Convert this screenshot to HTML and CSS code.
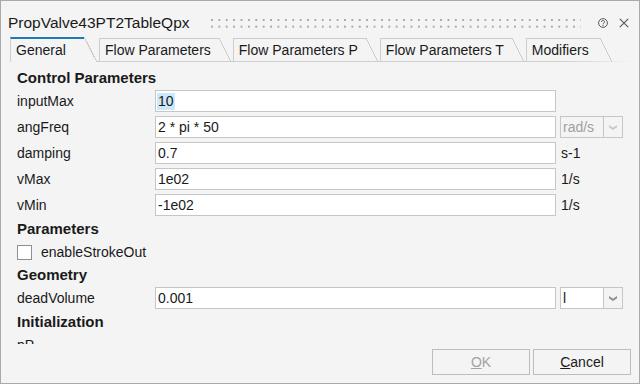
FILE: index.html
```html
<!DOCTYPE html>
<html>
<head>
<meta charset="utf-8">
<link rel="stylesheet" href="styles.css">
</head>
<body>
<div class="window">
  <div class="titlebar">
    <span class="title">PropValve43PT2TableQpx</span>
    <div class="grip"></div>
    <svg class="help" viewBox="0 0 10 10" width="10" height="10">
      <circle cx="5" cy="5" r="4.4" fill="none" stroke="#5a5a5a" stroke-width="1"/>
      <path d="M3.5 4 A1.5 1.5 0 1 1 5.8 5.2 C5.2 5.5 5 5.8 5 6.4" fill="none" stroke="#5a5a5a" stroke-width="1"/>
      <circle cx="5" cy="7.7" r="0.6" fill="#5a5a5a"/>
    </svg>
    <svg class="close" viewBox="0 0 10 10" width="10" height="10">
      <path d="M0.8 0.8 L9.2 9.2 M9.2 0.8 L0.8 9.2" stroke="#5a5a5a" stroke-width="1.2" fill="none"/>
    </svg>
  </div>

  <div class="tabs">
    <div class="tab active">General</div>
    <div class="tab">Flow Parameters</div>
    <div class="tab">Flow Parameters P</div>
    <div class="tab">Flow Parameters T</div>
    <div class="tab">Modifiers</div>
  </div>

  <div class="content">
    <div class="heading">Control Parameters</div>
    <div class="prop">
      <span class="label">inputMax</span>
      <div class="field"><span class="sel">10</span></div>
      <div class="unit"></div>
    </div>
    <div class="prop">
      <span class="label">angFreq</span>
      <div class="field">2 * pi * 50</div>
      <div class="unit">
        <div class="combo disabled">rad/s</div>
        <div class="arrow"><svg viewBox="0 0 8 5" width="8" height="5"><path d="M0 0 L4 2.8 L8 0 L8 2.2 L4 5 L0 2.2 Z" fill="#c8c8c8"/></svg></div>
      </div>
    </div>
    <div class="prop">
      <span class="label">damping</span>
      <div class="field">0.7</div>
      <div class="unit"><span class="unit-text">s-1</span></div>
    </div>
    <div class="prop">
      <span class="label">vMax</span>
      <div class="field">1e02</div>
      <div class="unit"><span class="unit-text">1/s</span></div>
    </div>
    <div class="prop">
      <span class="label">vMin</span>
      <div class="field">-1e02</div>
      <div class="unit"><span class="unit-text">1/s</span></div>
    </div>
    <div class="heading">Parameters</div>
    <div class="check-row">
      <span class="check"></span>
      <span>enableStrokeOut</span>
    </div>
    <div class="heading">Geometry</div>
    <div class="prop">
      <span class="label">deadVolume</span>
      <div class="field">0.001</div>
      <div class="unit">
        <div class="combo">l</div>
        <div class="arrow"><svg viewBox="0 0 8 5" width="8" height="5"><path d="M0 0 L4 2.8 L8 0 L8 2.2 L4 5 L0 2.2 Z" fill="#8c8c8c"/></svg></div>
      </div>
    </div>
    <div class="heading">Initialization</div>
    <div class="prop">
      <span class="label">pP</span>
    </div>
  </div>

  <div class="buttons">
    <button class="btn disabled"><u>O</u>K</button>
    <button class="btn"><u>C</u>ancel</button>
  </div>
</div>
</body>
</html>
```

FILE: styles.css
```css
body {
  margin: 0;
  font-family: "Liberation Sans", Arial, sans-serif;
  color: #1a1a1a;
}

.window {
  width: 640px;
  height: 384px;
  box-sizing: border-box;
  border: 1px solid #a9a9a9;
  background: #f4f4f4;
  display: flex;
  flex-direction: column;
  overflow: hidden;
}

.titlebar {
  height: 36px;
  flex-shrink: 0;
  box-sizing: border-box;
  padding: 8px 10px 0 7px;
  display: flex;
  align-items: center;
}

.title {
  font-size: 15.5px;
  white-space: nowrap;
}

.grip {
  flex: 1;
  height: 9px;
  margin: 0 17px 0 21px;
  background-color: #a6a6a6;
  background-image:
    linear-gradient(90deg, transparent 2px, #f4f4f4 2px),
    linear-gradient(transparent 2px, #f4f4f4 2px);
  background-size: 7.4px 6.7px;
}

.help {
  margin-right: 11px;
  flex-shrink: 0;
}

.close {
  flex-shrink: 0;
}

.tabs {
  height: 25px;
  flex-shrink: 0;
  display: flex;
  align-items: flex-end;
  padding-left: 9px;
  background: linear-gradient(to right, transparent 9px, #cfcfcf 9px, #cfcfcf 560px, rgba(207, 207, 207, 0) 632px) left bottom / 100% 1px no-repeat;
}

.tab {
  position: relative;
  box-sizing: border-box;
  height: 24px;
  min-width: 74px;
  padding: 0 8px 0 5px;
  border-top: 1px solid #cdcdcd;
  border-left: 1px solid #cdcdcd;
  font-size: 14px;
  line-height: 23px;
  margin-right: 14px;
  white-space: nowrap;
}

.tab::after {
  content: "";
  position: absolute;
  left: 100%;
  top: -1px;
  bottom: 0;
  width: 12px;
  background: linear-gradient(to top right, transparent calc(50% - 0.6px), #cdcdcd calc(50% - 0.6px), #cdcdcd calc(50% + 0.6px), transparent calc(50% + 0.6px));
}

.tab.active {
  height: 25px;
  border-top: 2px solid #1f7bb0;
  background: #f4f4f4;
  margin-right: 15px;
  z-index: 1;
}

.tab.active::after {
  top: -2px;
  width: 13px;
  background: linear-gradient(to top right, #f4f4f4 calc(50% - 0.6px), #cdcdcd calc(50% - 0.6px), #cdcdcd calc(50% + 0.6px), transparent calc(50% + 0.6px));
}

.content {
  flex: 1;
  min-height: 0;
  overflow: hidden;
  padding: 5px 16px 0 16px;
  margin-bottom: 5px;
  display: flex;
  flex-direction: column;
  gap: 1px;
  font-size: 14px;
}

.heading {
  height: 22px;
  line-height: 22px;
  font-weight: bold;
  font-size: 15px;
  flex-shrink: 0;
}

.prop {
  height: 22px;
  display: flex;
  align-items: center;
  flex-shrink: 0;
}

.prop + .prop {
  margin-top: 3px;
}

.prop + .heading {
  margin-top: 1px;
}

.label {
  width: 138px;
  flex-shrink: 0;
}

.field {
  flex: 1;
  height: 22px;
  box-sizing: border-box;
  border: 1px solid #c6c6c6;
  background: #fff;
  padding-left: 2px;
  line-height: 20px;
  white-space: nowrap;
  overflow: hidden;
}

.sel {
  display: inline-block;
  background: #cce8fb;
  line-height: 17px;
  padding: 0 1px;
  margin-left: -1px;
}

.unit {
  width: 63px;
  margin-left: 4px;
  height: 22px;
  display: flex;
  align-items: center;
  flex-shrink: 0;
}

.unit-text {
  padding-left: 1px;
}

.combo {
  width: 44px;
  height: 22px;
  box-sizing: border-box;
  border: 1px solid #c6c6c6;
  background: #fff;
  padding-left: 2px;
  line-height: 20px;
}

.combo.disabled {
  background: transparent;
  color: #a0a0a0;
}

.arrow {
  width: 19px;
  height: 22px;
  box-sizing: border-box;
  border: 1px solid #c6c6c6;
  border-left: none;
  display: flex;
  align-items: center;
  justify-content: center;
}

.check-row {
  height: 22px;
  display: flex;
  align-items: center;
  flex-shrink: 0;
}

.check {
  width: 15px;
  height: 15px;
  box-sizing: border-box;
  border: 1px solid #8f8f8f;
  background: #fff;
  margin-right: 9px;
}

.buttons {
  height: 26px;
  flex-shrink: 0;
  display: flex;
  justify-content: flex-end;
  gap: 3px;
  padding: 0 8px 8px 0;
}

.btn {
  width: 98px;
  height: 26px;
  box-sizing: border-box;
  border: 1px solid #bdbdbd;
  background: #f4f4f4;
  font-family: "Liberation Sans", Arial, sans-serif;
  font-size: 14px;
  color: #1a1a1a;
  padding: 0;
}

.btn.disabled {
  color: #a3a3a3;
}
```
